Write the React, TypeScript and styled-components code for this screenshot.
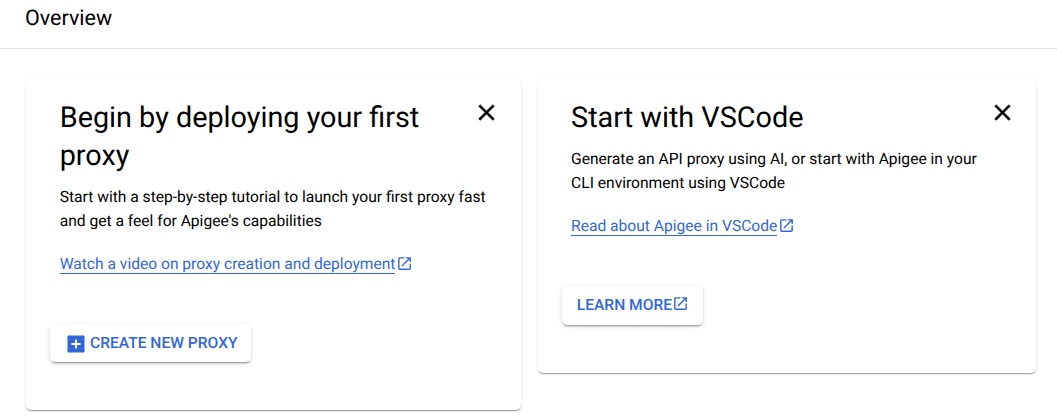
import React from "react";
import styled, { createGlobalStyle } from "styled-components";

const GlobalStyle = createGlobalStyle`
  * { box-sizing: border-box; }
  body { margin: 0; background: #fff; color: #000; font-family: Roboto, sans-serif; text-rendering: geometricPrecision; }
  h1, h2, p { margin: 0; font-weight: 400; }
`;

const Page = styled.div`
  height: 416px;
  overflow: hidden;
`;

const Header = styled.header`
  height: 49px;
  padding: 5px 25px 0;
  border-bottom: 1px solid #dfdfdf;
`;

const PageTitle = styled.h1`
  font-size: 21.5px;
  line-height: 28px;
`;

const Cards = styled.main`
  display: flex;
  align-items: flex-start;
  gap: 17px;
  padding: 30px 21px 0 26px;
`;

const Card = styled.section<{ $width: number; $height: number; $inset: number }>`
  width: ${(p) => p.$width}px;
  height: ${(p) => p.$height}px;
  padding: 20px ${(p) => p.$inset}px 0 24px;
  border-radius: 5px;
  background: #fff;
  box-shadow: 0 2px 1px -1px rgba(0, 0, 0, 0.2), 0 1px 1px rgba(0, 0, 0, 0.14), 0 1px 3px rgba(0, 0, 0, 0.12);
`;

const Content = styled.div<{ $indent: number }>`
  padding-left: ${(p) => p.$indent}px;
`;

const CardHead = styled.div`
  display: flex;
  justify-content: space-between;
  align-items: flex-start;
`;

const CardTitle = styled.h2`
  width: 370px;
  font-size: 28.8px;
  line-height: 38px;
`;

const CloseButton = styled.button`
  display: flex;
  margin: 0 -3px 0 0;
  padding: 0;
  border: 0;
  background: none;
  color: #000;
`;

const Body = styled.p`
  padding-top: 10px;
  font-size: 15.6px;
  line-height: 24px;
  white-space: nowrap;
`;

const LinkRow = styled.div`
  display: flex;
  align-items: flex-start;
  gap: 1px;
  padding-top: 21px;
  color: #3367d6;
`;

const TextLink = styled.a`
  height: 20px;
  font-size: 15.6px;
  line-height: 20px;
  border-bottom: 1px solid #3367d6;
  white-space: nowrap;
`;

const ActionButton = styled.button<{ $width: number; $height: number; $gap: number; $left: number }>`
  display: flex;
  align-items: center;
  gap: ${(p) => p.$gap}px;
  width: ${(p) => p.$width}px;
  height: ${(p) => p.$height}px;
  margin-top: 49.5px;
  padding: 0 0 0 ${(p) => p.$left}px;
  border: 0;
  border-radius: 5px;
  background: #fff;
  color: #3367d6;
  font: 500 15.6px/24px Roboto, sans-serif;
  text-rendering: inherit;
  white-space: nowrap;
  box-shadow: 0 3px 1px -2px rgba(0, 0, 0, 0.2), 0 2px 2px rgba(0, 0, 0, 0.14), 0 1px 5px rgba(0, 0, 0, 0.12);
`;

const Icon = styled.svg<{ $size: number; $shift?: number }>`
  flex: none;
  width: ${(p) => p.$size}px;
  height: ${(p) => p.$size}px;
  margin-top: ${(p) => p.$shift ?? 0}px;
  fill: currentColor;
`;

const CloseIcon = () => (
  <Icon $size={27} viewBox="0 0 24 24">
    <path
      d="M19 6.41L17.59 5 12 10.59 6.41 5 5 6.41 10.59 12 5 17.59 6.41 19 12 13.41 17.59 19 19 17.59 13.41 12z"
      stroke="currentColor"
      strokeWidth="0.4"
    />
  </Icon>
);

const OpenIcon = ({ shift }: { shift: number }) => (
  <Icon $size={17} $shift={shift} viewBox="0 0 24 24">
    <path d="M19 19H5V5h7V3H5c-1.11 0-2 .9-2 2v14c0 1.1.89 2 2 2h14c1.1 0 2-.9 2-2v-7h-2v7zM14 3v2h3.59l-9.83 9.83 1.41 1.41L19 6.41V10h2V3h-7z" />
  </Icon>
);

const AddIcon = () => (
  <Icon $size={22} $shift={2} viewBox="0 0 24 24">
    <path d="M20.3 2.7H3.7c-.55 0-1 .45-1 1v16.6c0 .55.45 1 1 1h16.6c.55 0 1-.45 1-1V3.7c0-.55-.45-1-1-1zM17 13h-4v4h-2v-4H7v-2h4V7h2v4h4v2z" />
  </Icon>
);

export default function App() {
  return (
    <Page>
      <GlobalStyle />
      <Header>
        <PageTitle>Overview</PageTitle>
      </Header>
      <Cards>
        <Card $width={495} $height={331} $inset={24}>
          <Content $indent={9.7}>
            <CardHead>
              <CardTitle>Begin by deploying your first proxy</CardTitle>
              <CloseButton aria-label="Close"><CloseIcon /></CloseButton>
            </CardHead>
            <Body>
              Start with a step-by-step tutorial to launch your first proxy fast
              <br />
              and get a feel for Apigee's capabilities
            </Body>
            <LinkRow>
              <TextLink>Watch a video on proxy creation and deployment</TextLink>
              <OpenIcon shift={1} />
            </LinkRow>
          </Content>
          <ActionButton $width={201} $height={38.5} $gap={3.5} $left={14.5}>
            <AddIcon />
            CREATE NEW PROXY
          </ActionButton>
        </Card>
        <Card $width={498} $height={294} $inset={23}>
          <Content $indent={9.1}>
            <CardHead>
              <CardTitle>Start with VSCode</CardTitle>
              <CloseButton aria-label="Close"><CloseIcon /></CloseButton>
            </CardHead>
            <Body>
              Generate an API proxy using AI, or start with Apigee in your
              <br />
              CLI environment using VSCode
            </Body>
            <LinkRow>
              <TextLink>Read about Apigee in VSCode</TextLink>
              <OpenIcon shift={1} />
            </LinkRow>
          </Content>
          <ActionButton $width={141} $height={39} $gap={0.3} $left={14.8}>
            LEARN MORE
            <OpenIcon shift={-3} />
          </ActionButton>
        </Card>
      </Cards>
    </Page>
  );
}
